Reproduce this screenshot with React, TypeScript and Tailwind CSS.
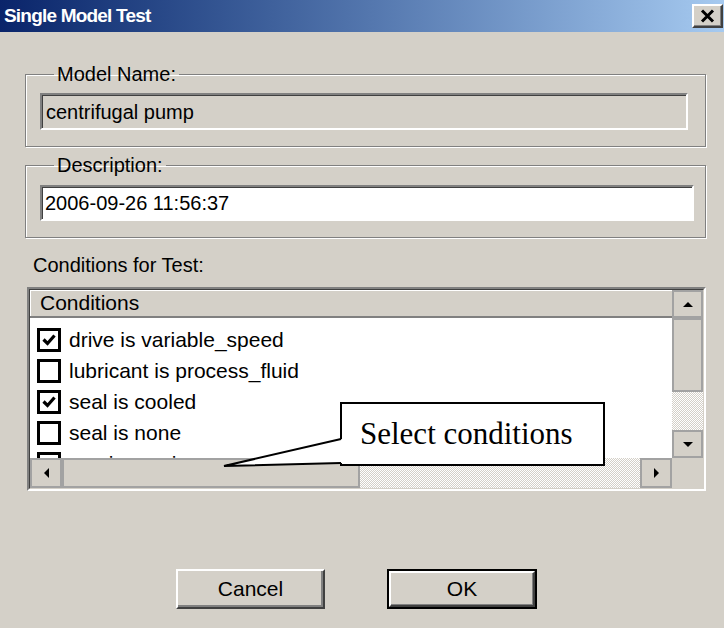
import React from "react";

type Condition = { label: string; checked: boolean };

const conditions: Condition[] = [
  { label: "drive is variable_speed", checked: true },
  { label: "lubricant is process_fluid", checked: false },
  { label: "seal is cooled", checked: true },
  { label: "seal is none", checked: false },
  { label: "use is running", checked: false },
];

function CheckBox({ checked }: { checked: boolean }) {
  return (
    <span className="flex h-[24px] w-[24px] shrink-0 items-center justify-center border-[3px] border-black bg-white">
      {checked && (
        <svg width="16" height="14" viewBox="0 0 16 14">
          <path d="M2.5 6.5 L6.5 10.5 L13.5 2.5" stroke="black" strokeWidth="3.2" fill="none" />
        </svg>
      )}
    </span>
  );
}

function Arrow({ dir }: { dir: "up" | "down" | "left" | "right" }) {
  const paths = {
    up: "M1 6 L6 1 L11 6 Z",
    down: "M1 1 L11 1 L6 6 Z",
    left: "M6 1 L6 11 L1 6 Z",
    right: "M1 1 L1 11 L6 6 Z",
  };
  const vertical = dir === "up" || dir === "down";
  return (
    <svg width={vertical ? 12 : 7} height={vertical ? 7 : 12} viewBox={vertical ? "0 0 12 7" : "0 0 7 12"}>
      <path d={paths[dir]} fill="black" />
    </svg>
  );
}

function ScrollButton({ dir, className }: { dir: "up" | "down" | "left" | "right"; className: string }) {
  return (
    <div className={`flex shrink-0 items-center justify-center border-2 border-[#a2a2a2] bg-[#d4d0c8] ${className}`}>
      <Arrow dir={dir} />
    </div>
  );
}

const dither = "bg-[repeating-conic-gradient(#d4d0c8_0_25%,#ffffff_0_50%)] bg-[length:2px_2px]";

export default function App() {
  return (
    <div className="relative h-[628px] w-[724px] overflow-hidden bg-[#d4d0c8] font-['Liberation_Sans',Arial,sans-serif] text-[20px] text-black">
      {/* title bar */}
      <div className="flex h-[32px] items-center justify-between bg-linear-to-r from-[#0a246a] to-[#a6caf0] pl-[4px] pr-[1px]">
        <span className="text-[19px] font-bold tracking-[-0.8px] text-white">Single Model Test</span>
        <button className="flex h-[24px] w-[31px] items-center justify-center border-2 border-t-white border-l-white border-r-[#404040] border-b-[#404040] bg-[#d4d0c8] shadow-[inset_-1px_-1px_0_#808080]">
          <svg width="15" height="14" viewBox="0 0 15 14">
            <path d="M2 1.5 L13 12.5 M13 1.5 L2 12.5" stroke="black" strokeWidth="3" />
          </svg>
        </button>
      </div>

      {/* model name */}
      <fieldset className="ml-[25px] mr-[18px] mt-[31px] border border-[#808080] pb-[16px] pl-[14px] pr-[17px] shadow-[inset_1px_1px_0_#fff,1px_1px_0_#fff]">
        <legend className="ml-[14px] px-[3px] leading-[22px]">Model Name:</legend>
        <div className="mt-[8px] flex h-[37px] items-center border-2 border-t-[#808080] border-l-[#808080] border-b-white border-r-white bg-[#d4d0c8] pl-[4px] shadow-[inset_1px_1px_0_#404040]">
          centrifugal pump
        </div>
      </fieldset>

      {/* description */}
      <fieldset className="ml-[25px] mr-[18px] mt-[7px] border border-[#808080] pb-[16px] pl-[14px] pr-[11px] shadow-[inset_1px_1px_0_#fff,1px_1px_0_#fff]">
        <legend className="ml-[14px] px-[3px] leading-[22px]">Description:</legend>
        <div className="mt-[9px] flex h-[36px] items-center border-2 border-t-[#808080] border-l-[#808080] border-b-white border-r-white bg-white pl-[3px] shadow-[inset_1px_1px_0_#404040]">
          2006-09-26 11:56:37
        </div>
      </fieldset>

      <div className="ml-[33px] mt-[16px] leading-[22px]">Conditions for Test:</div>

      {/* conditions list */}
      <div className="ml-[27px] mr-[18px] mt-[11px] h-[204px] border-2 border-t-[#808080] border-l-[#808080] border-b-white border-r-white">
        <div className="flex h-full border border-t-[#404040] border-l-[#404040] border-b-[#d4d0c8] border-r-[#d4d0c8]">
          <div className="flex min-w-0 flex-1 flex-col">
            <div className="flex h-[28px] shrink-0 items-center border-b-2 border-[#808080] bg-[#d4d0c8] pl-[10px] shadow-[inset_1px_1px_0_#fff] text-[21px]">
              Conditions
            </div>
            <div className="flex-1 overflow-hidden bg-white pl-[7px] pt-[6px] text-[21px]">
              {conditions.map((c) => (
                <div key={c.label} className="flex h-[31px] items-center gap-[8px] whitespace-nowrap">
                  <CheckBox checked={c.checked} />
                  <span>{c.label}</span>
                </div>
              ))}
            </div>
            <div className="flex h-[30px] shrink-0">
              <ScrollButton dir="left" className="w-[32px]" />
              <div className="w-[298px] shrink-0 border-2 border-[#a2a2a2] bg-[#d4d0c8]" />
              <div className={`flex-1 ${dither}`} />
              <ScrollButton dir="right" className="w-[32px]" />
            </div>
          </div>
          <div className="flex w-[31px] shrink-0 flex-col">
            <ScrollButton dir="up" className="h-[28px]" />
            <div className="h-[74px] shrink-0 border-2 border-[#a2a2a2] bg-[#d4d0c8]" />
            <div className={`flex-1 ${dither}`} />
            <ScrollButton dir="down" className="h-[28px]" />
            <div className="h-[30px] shrink-0 bg-[#d4d0c8]" />
          </div>
        </div>
      </div>

      {/* buttons */}
      <div className="ml-[176px] mt-[78px] flex gap-[62px] text-[21px]">
        <button className="flex h-[40px] w-[149px] items-center justify-center border-2 border-t-white border-l-white border-r-[#404040] border-b-[#404040] bg-[#d4d0c8] shadow-[inset_-2px_-2px_0_#808080]">
          Cancel
        </button>
        <button className="h-[40px] w-[150px] border-2 border-black">
          <span className="flex h-full w-full items-center justify-center border-2 border-t-white border-l-white border-r-[#404040] border-b-[#404040] bg-[#d4d0c8] shadow-[inset_-1px_-1px_0_#808080]">
            OK
          </span>
        </button>
      </div>

      {/* callout */}
      <div className="absolute left-[340px] top-[402px] flex h-[64px] w-[265px] items-center border-2 border-black bg-white pl-[18px] font-['Liberation_Serif','Times_New_Roman',serif] text-[31px]">
        Select conditions
      </div>
      <svg className="absolute left-0 top-0" width="724" height="628" viewBox="0 0 724 628">
        <path d="M342 439 L224 466 L342 463 Z" fill="white" />
        <path d="M341 439 L224 466 L341 463" fill="none" stroke="black" strokeWidth="2" />
      </svg>
    </div>
  );
}
